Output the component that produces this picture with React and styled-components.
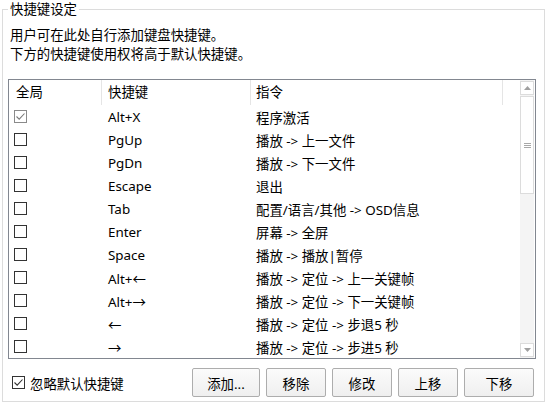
import React from 'react';
import styled, { createGlobalStyle } from 'styled-components';

const GlobalStyle = createGlobalStyle`
  html, body {
    margin: 0;
    padding: 0;
    background: #ffffff;
  }
  body {
    font-family: "Noto Sans", "Noto Sans CJK SC", sans-serif;
    font-size: 13.4px;
    color: #000000;
  }
`;

const Page = styled.div`
  width: 546px;
  height: 406px;
  background: #ffffff;
  overflow: hidden;
`;

const Group = styled.fieldset`
  margin: 0 1px 0 2px;
  padding: 7px 8px 4px 5px;
  border: 1px solid #dcdcdc;
  min-width: 0;
  display: flex;
  flex-direction: column;
`;

const Legend = styled.legend`
  padding: 0 2px;
  line-height: 19px;
`;

const Desc = styled.div`
  padding-left: 2px;
  line-height: 19px;
`;

const ListView = styled.div`
  margin-top: 15px;
  height: 280px;
  box-sizing: border-box;
  border: 1px solid #828790;
  display: flex;
`;

const Table = styled.div`
  flex: 1;
  overflow: hidden;
`;

const Header = styled.div`
  display: flex;
  height: 25px;
`;

const HeadCell = styled.div`
  box-sizing: border-box;
  width: ${(p) => p.$w}px;
  padding-left: ${(p) => p.$pad}px;
  border-right: 1px solid #e5e5e5;
  line-height: 25px;
  white-space: nowrap;
`;

const Row = styled.div`
  display: flex;
  align-items: center;
  height: 23px;
`;

const Cell = styled.div`
  box-sizing: border-box;
  width: ${(p) => p.$w}px;
  padding-left: ${(p) => p.$pad}px;
  white-space: nowrap;
  display: flex;
  align-items: center;
`;

const Box = styled.span`
  box-sizing: border-box;
  width: 13px;
  height: 13px;
  border: 1px solid ${(p) => (p.$muted ? '#8a8a8a' : '#333333')};
  background: #ffffff;
  display: inline-flex;
  align-items: center;
  justify-content: center;
  flex-shrink: 0;
`;

const Scrollbar = styled.div`
  width: 14px;
  margin-right: 1px;
  display: flex;
  flex-direction: column;
  background: #f4f4f4;
`;

const ArrowBox = styled.div`
  box-sizing: border-box;
  height: 14px;
  margin: ${(p) => (p.$down ? '0 0 1px 0' : '1px 0 0 0')};
  border: 1px solid #dcdcdc;
  background: #ffffff;
  display: flex;
  align-items: center;
  justify-content: center;
`;

const Thumb = styled.div`
  box-sizing: border-box;
  height: 98px;
  margin-top: 1px;
  border: 1px solid #dcdcdc;
  background: #ffffff;
  display: flex;
  align-items: center;
  justify-content: center;
`;

const Track = styled.div`
  flex: 1;
`;

const Footer = styled.div`
  margin-top: 9px;
  display: flex;
  align-items: center;
  height: 29px;
  padding-right: 2px;
`;

const CheckLabel = styled.label`
  display: flex;
  align-items: center;
  gap: 5px;
  margin-left: 4px;
  flex: 1;
  white-space: nowrap;
`;

const Buttons = styled.div`
  display: flex;
  gap: 6px;
`;

const Button = styled.button`
  box-sizing: border-box;
  width: ${(p) => p.$w}px;
  height: 29px;
  border: 1px solid #adadad;
  border-radius: 2px;
  background: linear-gradient(#fbfbfb, #efefef);
  font-family: "Noto Sans", "Noto Sans CJK SC", sans-serif;
  font-size: 13.4px;
  color: #000000;
  padding: 0;
`;

const Check = ({ checked, muted }) => (
  <Box $muted={muted}>
    {checked && (
      <svg width="11" height="11" viewBox="0 0 11 11">
        <polyline
          points="1.5,5.5 4.2,8.2 9.5,2.5"
          fill="none"
          stroke={muted ? '#7a7a7a' : '#333333'}
          strokeWidth="1.1"
        />
      </svg>
    )}
  </Box>
);

const rows = [
  { on: true, key: 'Alt+X', cmd: '程序激活' },
  { key: 'PgUp', cmd: '播放 -> 上一文件' },
  { key: 'PgDn', cmd: '播放 -> 下一文件' },
  { key: 'Escape', cmd: '退出' },
  { key: 'Tab', cmd: '配置/语言/其他 -> OSD信息' },
  { key: 'Enter', cmd: '屏幕 -> 全屏' },
  { key: 'Space', cmd: '播放 -> 播放|暂停' },
  { key: 'Alt+←', cmd: '播放 -> 定位 -> 上一关键帧' },
  { key: 'Alt+→', cmd: '播放 -> 定位 -> 下一关键帧' },
  { key: '←', cmd: '播放 -> 定位 -> 步退5 秒' },
  { key: '→', cmd: '播放 -> 定位 -> 步进5 秒' }
];

const cols = [93, 149, 252];

export default function App() {
  return (
    <Page>
      <GlobalStyle />
      <Group>
        <Legend>快捷键设定</Legend>
        <Desc>用户可在此处自行添加键盘快捷键。</Desc>
        <Desc>下方的快捷键使用权将高于默认快捷键。</Desc>
        <ListView>
          <Table>
            <Header>
              <HeadCell $w={cols[0]} $pad={7}>全局</HeadCell>
              <HeadCell $w={cols[1]} $pad={6}>快捷键</HeadCell>
              <HeadCell $w={cols[2]} $pad={5}>指令</HeadCell>
            </Header>
            {rows.map((r, i) => (
              <Row key={i}>
                <Cell $w={cols[0]} $pad={5}>
                  <Check checked={r.on} muted={r.on} />
                </Cell>
                <Cell $w={cols[1]} $pad={6}>{r.key}</Cell>
                <Cell $w={cols[2]} $pad={5}>{r.cmd}</Cell>
              </Row>
            ))}
          </Table>
          <Scrollbar>
            <ArrowBox>
              <svg width="7" height="4" viewBox="0 0 7 4">
                <polygon points="0,4 7,4 3.5,0" fill="#a0a0a0" />
              </svg>
            </ArrowBox>
            <Thumb>
              <svg width="7" height="5" viewBox="0 0 7 5">
                <path d="M0 0.5H7M0 2.5H7M0 4.5H7" stroke="#a8a8a8" strokeWidth="1" />
              </svg>
            </Thumb>
            <Track />
            <ArrowBox $down>
              <svg width="7" height="4" viewBox="0 0 7 4">
                <polygon points="0,0 7,0 3.5,4" fill="#a0a0a0" />
              </svg>
            </ArrowBox>
          </Scrollbar>
        </ListView>
        <Footer>
          <CheckLabel>
            <Check checked />
            忽略默认快捷键
          </CheckLabel>
          <Buttons>
            <Button $w={68}>添加...</Button>
            <Button $w={60}>移除</Button>
            <Button $w={60}>修改</Button>
            <Button $w={60}>上移</Button>
            <Button $w={70}>下移</Button>
          </Buttons>
        </Footer>
      </Group>
    </Page>
  );
}
